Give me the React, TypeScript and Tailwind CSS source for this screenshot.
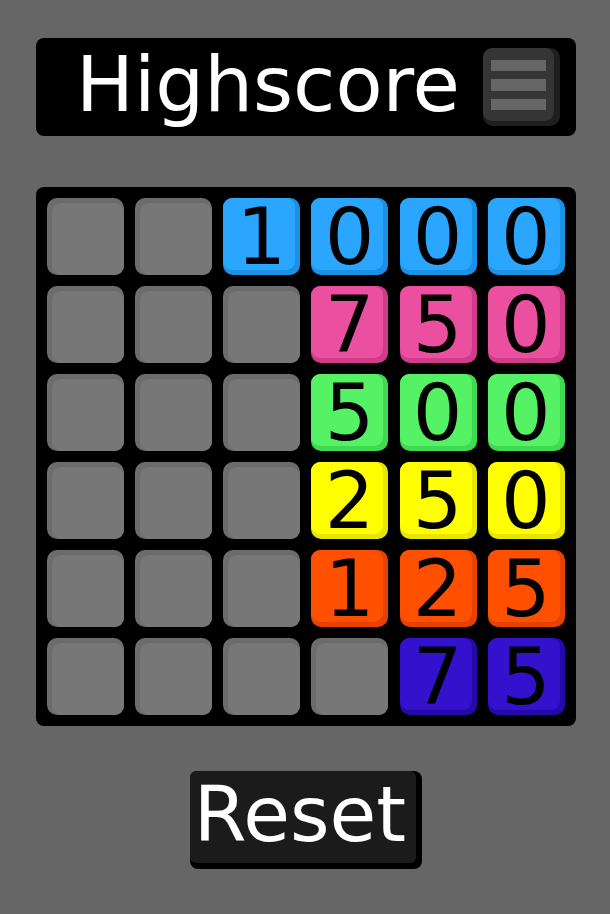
type Tile = { digit: string; face: string; shade: string } | null;

const BLUE = { face: "bg-[#2aa6ff]", shade: "bg-[#1992e6]" };
const PINK = { face: "bg-[#ea4fa0]", shade: "bg-[#d03b8a]" };
const GREEN = { face: "bg-[#55f266]", shade: "bg-[#3fda52]" };
const YELLOW = { face: "bg-[#ffff00]", shade: "bg-[#e6e600]" };
const ORANGE = { face: "bg-[#ff5000]", shade: "bg-[#e54200]" };
const INDIGO = { face: "bg-[#3411cc]", shade: "bg-[#2709a8]" };

const row = (blanks: number, digits: string, color: { face: string; shade: string }): Tile[] => [
  ...Array.from({ length: blanks }, () => null),
  ...digits.split("").map((digit) => ({ digit, ...color })),
];

const BOARD: Tile[][] = [
  row(2, "1000", BLUE),
  row(3, "750", PINK),
  row(3, "500", GREEN),
  row(3, "250", YELLOW),
  row(3, "125", ORANGE),
  row(4, "75", INDIGO),
];

const FONT = "font-['DejaVu_Sans',sans-serif]";

function Cell({ tile }: { tile: Tile }) {
  if (!tile) {
    return (
      <div className="flex h-[77px] w-[77px] rounded-[10px] bg-[#6c6c6c] pl-[5px] pt-[5px]">
        <div className="flex-1 rounded-[9px] bg-[#777777]" />
      </div>
    );
  }
  return (
    <div className={`flex h-[77px] w-[77px] rounded-[10px] pb-[5px] pr-[5px] ${tile.shade}`}>
      <div
        className={`flex flex-1 items-center justify-center rounded-[9px] pl-[4px] pt-[6px] text-[78px] leading-none text-black ${tile.face}`}
      >
        {tile.digit}
      </div>
    </div>
  );
}

export default function App() {
  return (
    <div className={`flex min-h-[914px] w-full flex-col items-center bg-[#666666] pl-[2px] pt-[38px] ${FONT}`}>
      <div className="flex h-[98px] w-[540px] items-center rounded-[8px] bg-black pl-[40px] pr-[16px]">
        <span className="flex-1 pb-[6px] text-[77px] leading-none text-white">Highscore</span>
        <button className="flex h-[78px] w-[77px] rounded-[10px] bg-[#1f1f1f] pb-[5px] pr-[6px]">
          <div className="flex flex-1 flex-col justify-center gap-[8px] rounded-[9px] bg-[#353535] px-[8px]">
            <div className="h-[11px] bg-[#666666]" />
            <div className="h-[12px] bg-[#666666]" />
            <div className="h-[11px] bg-[#666666]" />
          </div>
        </button>
      </div>

      <div className="mt-[51px] grid w-[540px] grid-cols-6 gap-[11px] rounded-[8px] bg-black p-[11px]">
        {BOARD.flat().map((tile, i) => (
          <Cell key={i} tile={tile} />
        ))}
      </div>

      <button className="mt-[45px] flex h-[98px] w-[232px] rounded-[8px] bg-black pb-[6px] pr-[6px]">
        <div className="flex flex-1 items-center justify-center rounded-[6px] bg-[#1b1b1b] pb-[4px] pr-[6px] text-[76px] leading-none text-white">
          Reset
        </div>
      </button>
    </div>
  );
}
